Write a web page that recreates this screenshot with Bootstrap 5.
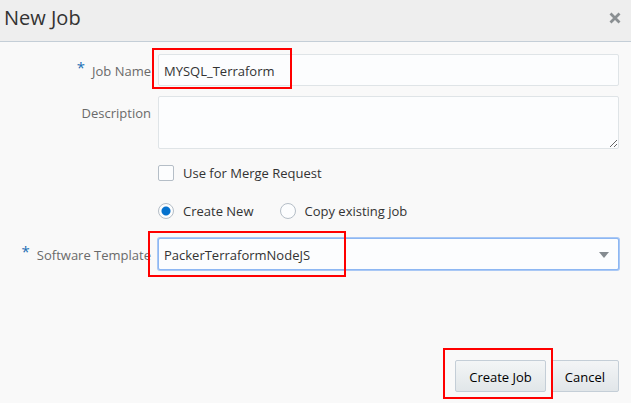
<!DOCTYPE html>
<html lang="en">
<head>
<meta charset="utf-8">
<meta name="viewport" content="width=device-width, initial-scale=1">
<title>New Job</title>
<link href="https://cdn.jsdelivr.net/npm/bootstrap@5.3.0/dist/css/bootstrap.min.css" rel="stylesheet">
<style>
  body { font-family: "Open Sans", "Noto Sans", sans-serif; font-size: 13px; line-height: 20px; color: #333; background: #f9f9f9; }
  .dialog-head { height: 42px; padding: 0 9px 6px 4px; background: #eee; border-bottom: 1px solid #c4ced7; }
  .dialog-title { font-size: 20px; line-height: 28px; font-weight: 400; color: #333; }
  .close-btn { width: 14px; height: 14px; line-height: 0; }
  .dialog-form { padding: 12px 0 11px; }
  .form-line { display: grid; grid-template-columns: 151px minmax(0, 1fr); column-gap: 7px; padding-right: 12px; margin-bottom: 10px; }
  .template-line { margin-top: 3px; }
  .field-label { color: #6a6a6a; text-align: right; padding-top: 7px; white-space: nowrap; }
  .req { color: #1b6fb5; font-size: 15px; line-height: 12px; margin-right: 7px; vertical-align: 3px; }
  .field { font-size: 13px; line-height: 20px; color: #333; background-color: #fcfdfe; border: 1px solid #dfe4e7; border-radius: 2px; padding: 6px 5px 4px; }
  .field:focus { box-shadow: none; }
  input.field, select.field { height: 32px; }
  textarea.field { height: 53px; min-height: 53px; }
  select.field { border-color: #8db7f3; box-shadow: 0 0 0 1px #a9c8f5; }
  .caret { right: 10px; top: 14px; line-height: 0; pointer-events: none; }
  .choices { min-height: 28px; gap: 26px; }
  .choice { gap: 9px; }
  .choice .form-check-input { width: 16px; height: 16px; margin: 0; background-color: #fcfdfe; border: 1px solid #b5bec7; }
  .choice .form-check-input[type=checkbox] { border-radius: 2px; }
  .choice .form-check-input[type=radio]:checked { background-image: radial-gradient(circle, #0572ce 4px, #fcfdfe 5px); }
  .action { font-size: 13px; line-height: 20px; height: 32px; padding: 6px 13px 4px; color: #000; border: 1px solid #c4ced7; border-radius: 2px; background: linear-gradient(#f3f5f6, #e1e6e9); }
  .actions { gap: 5px; padding-right: 12px; }
  .callout { border: 2px solid #f00; pointer-events: none; z-index: 2; }
  .callout-name { left: -6px; top: -6px; width: 140px; height: 41px; }
  .callout-template { left: -10px; top: -7px; width: 198px; height: 46px; }
  .callout-create { inset: -12px -7px -7px -12px; }
</style>
<script src="https://cdn.jsdelivr.net/npm/bootstrap@5.3.0/dist/js/bootstrap.bundle.min.js"></script>
</head>
<body>
<main class="d-flex flex-column min-vh-100">
  <header class="dialog-head d-flex align-items-center justify-content-between">
    <h1 class="dialog-title m-0">New Job</h1>
    <button type="button" class="close-btn btn p-0 border-0" aria-label="Close">
      <svg width="14" height="14" viewBox="0 0 14 14" aria-hidden="true"><path d="M2.5 2.5l9 9M11.500 2.500l-9 9" stroke="#8a8f92" stroke-width="2.8" fill="none"/></svg>
    </button>
  </header>
  <form class="dialog-form d-flex flex-column flex-grow-1">
    <div class="form-line">
      <label class="field-label" for="name"><span class="req">*</span>Job Name</label>
      <div class="position-relative">
        <input id="name" type="text" class="field form-control" value="MYSQL_Terraform">
        <div class="callout callout-name position-absolute"></div>
      </div>
    </div>
    <div class="form-line">
      <label class="field-label" for="desc">Description</label>
      <textarea id="desc" class="field form-control"></textarea>
    </div>
    <div class="form-line">
      <span></span>
      <div class="choices d-flex align-items-center">
        <div class="choice d-flex align-items-center">
          <input class="form-check-input" type="checkbox" id="merge"><label for="merge">Use for Merge Request</label>
        </div>
      </div>
    </div>
    <div class="form-line">
      <span></span>
      <div class="choices d-flex align-items-center">
        <div class="choice d-flex align-items-center">
          <input class="form-check-input" type="radio" name="mode" id="fresh" checked><label for="fresh">Create New</label>
        </div>
        <div class="choice d-flex align-items-center">
          <input class="form-check-input" type="radio" name="mode" id="copy"><label for="copy">Copy existing job</label>
        </div>
      </div>
    </div>
    <div class="form-line template-line">
      <label class="field-label" for="template"><span class="req">*</span>Software Template</label>
      <div class="position-relative">
        <select id="template" class="field form-control"><option>PackerTerraformNodeJS</option></select>
        <span class="caret position-absolute"><svg width="10" height="6" viewBox="0 0 10 6" aria-hidden="true"><path d="M0 0h10L5 6z" fill="#858b90"/></svg></span>
        <div class="callout callout-template position-absolute"></div>
      </div>
    </div>
    <div class="actions d-flex justify-content-end mt-auto">
      <div class="position-relative">
        <button type="button" class="action btn">Create Job</button>
        <div class="callout callout-create position-absolute"></div>
      </div>
      <button type="button" class="action btn">Cancel</button>
    </div>
  </form>
</main>
</body>
</html>
